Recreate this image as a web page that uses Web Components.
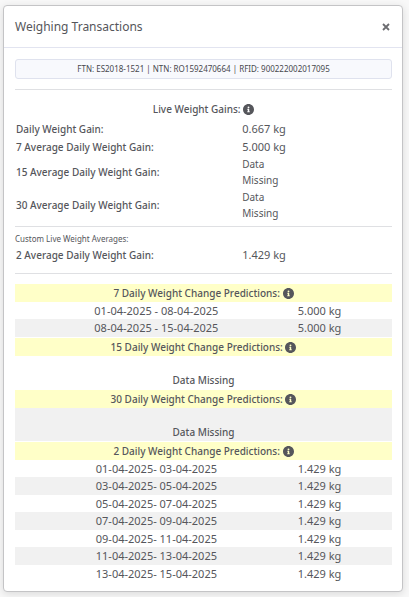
<!DOCTYPE html>
<html lang="en">
<head>
<meta charset="utf-8">
<title>Weighing Transactions</title>
<style>
  body {
    margin: 0;
    padding: 5px 6px 5px 3px;
    background: #f8f8f8;
    color: #55565b;
    font: 11px/16px "Noto Sans", "Open Sans", sans-serif;
  }
  prediction-group + prediction-group { padding-top: 1px; }
</style>
</head>
<body>
<modal-card>
  <span slot="title">Weighing Transactions</span>
  <animal-tag>FTN: ES2018-1521 | NTN: RO1592470664 | RFID: 900222002017095</animal-tag>
  <weight-gains></weight-gains>
  <prediction-group days="7" rows="01-04-2025 - 08-04-2025=5.000 kg;08-04-2025 - 15-04-2025=5.000 kg"></prediction-group>
  <prediction-group days="15"></prediction-group>
  <prediction-group days="30" shaded></prediction-group>
  <prediction-group days="2" rows="01-04-2025- 03-04-2025=1.429 kg;03-04-2025- 05-04-2025=1.429 kg;05-04-2025- 07-04-2025=1.429 kg;07-04-2025- 09-04-2025=1.429 kg;09-04-2025- 11-04-2025=1.429 kg;11-04-2025- 13-04-2025=1.429 kg;13-04-2025- 15-04-2025=1.429 kg"></prediction-group>
</modal-card>

<script>
class InfoIcon extends HTMLElement {
  constructor() {
    super();
    this.attachShadow({ mode: "open" }).innerHTML = `
      <style>
        :host { display: inline-block; width: 11px; height: 11px; vertical-align: -2px; }
        svg { display: block; width: 100%; height: 100%; }
      </style>
      <svg viewBox="8 8 496 496" aria-hidden="true">
        <path fill="currentColor" d="M256 8C119 8 8 119 8 256s111 248 248 248 248-111 248-248S393 8 256 8zm0 110a42 42 0 1 1 0 84 42 42 0 0 1 0-84zm56 254a12 12 0 0 1-12 12h-88a12 12 0 0 1-12-12v-24a12 12 0 0 1 12-12h12v-64h-12a12 12 0 0 1-12-12v-24a12 12 0 0 1 12-12h64a12 12 0 0 1 12 12v100h12a12 12 0 0 1 12 12v24z"/>
      </svg>`;
  }
}
customElements.define("info-icon", InfoIcon);

class ModalCard extends HTMLElement {
  constructor() {
    super();
    this.attachShadow({ mode: "open" }).innerHTML = `
      <style>
        :host {
          display: block; background: #fff; border: 1px solid #c4c4c6;
          border-radius: 4px; box-shadow: 0 2px 8px rgba(0, 0, 0, .12);
        }
        header {
          display: flex; align-items: center; justify-content: space-between;
          padding: 0 10px 0 11px; height: 41px; border-bottom: 1px solid #e2e4f0;
        }
        h1 { margin: 0; font-size: 12px; line-height: 20px; font-weight: 400; }
        button {
          display: flex; padding: 2px; border: 0; background: none; color: #6c6d71;
        }
        svg { width: 8px; height: 8px; }
        main { padding: 11px 10px 9px 11px; }
      </style>
      <header>
        <h1><slot name="title"></slot></h1>
        <button type="button" aria-label="Close">
          <svg viewBox="0 0 8 8"><path d="M1 1l6 6M7 1L1 7" stroke="currentColor" stroke-width="1.8" fill="none"/></svg>
        </button>
      </header>
      <main><slot></slot></main>`;
  }
}
customElements.define("modal-card", ModalCard);

class AnimalTag extends HTMLElement {
  constructor() {
    super();
    this.attachShadow({ mode: "open" }).innerHTML = `
      <style>
        :host {
          display: block; border: 1px solid #dfe2ee; border-radius: 3px;
          background: #f8f9fd; text-align: center; color: #47484d;
          font-size: 8px; line-height: 18px;
        }
      </style>
      <slot></slot>`;
  }
}
customElements.define("animal-tag", AnimalTag);

class WeightGains extends HTMLElement {
  constructor() {
    super();
    this.attachShadow({ mode: "open" }).innerHTML = `
      <style>
        :host { display: block; margin-bottom: 10px; }
        hr { margin: 0; border: 0; border-top: 1px solid #dfe0e3; }
        .first { margin: 10px 0; }
        .last { margin-top: 10px; }
        h2, h3 { margin: 0; font-weight: 500; }
        h2 { font-size: 10px; line-height: 19px; text-align: center; }
        h3 { font-size: 8px; line-height: 13px; margin-top: 5px; font-weight: 400; }
        table { width: 100%; border-collapse: collapse; table-layout: fixed; }
        tr { height: 18px; }
        th, td { padding: 1px 1px 0; text-align: left; vertical-align: middle; }
        th { width: 60%; font-size: 10px; font-weight: 500; box-sizing: border-box; }
        .gains { margin-bottom: 5px; }
        .none { font-size: 10px; }
      </style>
      <hr class="first">
      <h2>Live Weight Gains: <info-icon></info-icon></h2>
      <table class="gains">
        <tr><th scope="row">Daily Weight Gain:</th><td>0.667 kg</td></tr>
        <tr><th scope="row">7 Average Daily Weight Gain:</th><td>5.000 kg</td></tr>
        <tr><th scope="row">15 Average Daily Weight Gain:</th><td class="none">Data<br>Missing</td></tr>
        <tr><th scope="row">30 Average Daily Weight Gain:</th><td class="none">Data<br>Missing</td></tr>
      </table>
      <hr>
      <h3>Custom Live Weight Averages:</h3>
      <table>
        <tr><th scope="row">2 Average Daily Weight Gain:</th><td>1.429 kg</td></tr>
      </table>
      <hr class="last">`;
  }
}
customElements.define("weight-gains", WeightGains);

class PredictionGroup extends HTMLElement {
  constructor() {
    super();
    this.attachShadow({ mode: "open" });
  }
  connectedCallback() {
    const rows = (this.getAttribute("rows") || "").split(";").filter(Boolean);
    const body = rows.length
      ? `<tbody>${rows.map(r => {
          const [range, weight] = r.split("=");
          return `<tr><td class="range">${range}</td><td>${weight}</td></tr>`;
        }).join("")}</tbody>`
      : `<tbody><tr class="missing"><td colspan="2">Data Missing</td></tr></tbody>`;
    this.shadowRoot.innerHTML = `
      <style>
        :host { display: block; }
        table { width: 100%; border-collapse: collapse; table-layout: fixed; }
        caption {
          background: #ffffc8; font-size: 10px; font-weight: 500; line-height: 18px;
        }
        td { padding: 0; line-height: 17px; }
        .range { width: 75%; text-align: center; }
        tr:nth-child(even) td { line-height: 18px; }
        tr:nth-child(even), :host([shaded]) tr { background: #f1f1f1; }
        .missing td { padding-top: 16px; text-align: center; font-size: 10px; font-weight: 500; }
      </style>
      <table>
        <caption>${this.getAttribute("days")} Daily Weight Change Predictions: <info-icon></info-icon></caption>
        ${body}
      </table>`;
  }
}
customElements.define("prediction-group", PredictionGroup);
</script>
</body>
</html>
